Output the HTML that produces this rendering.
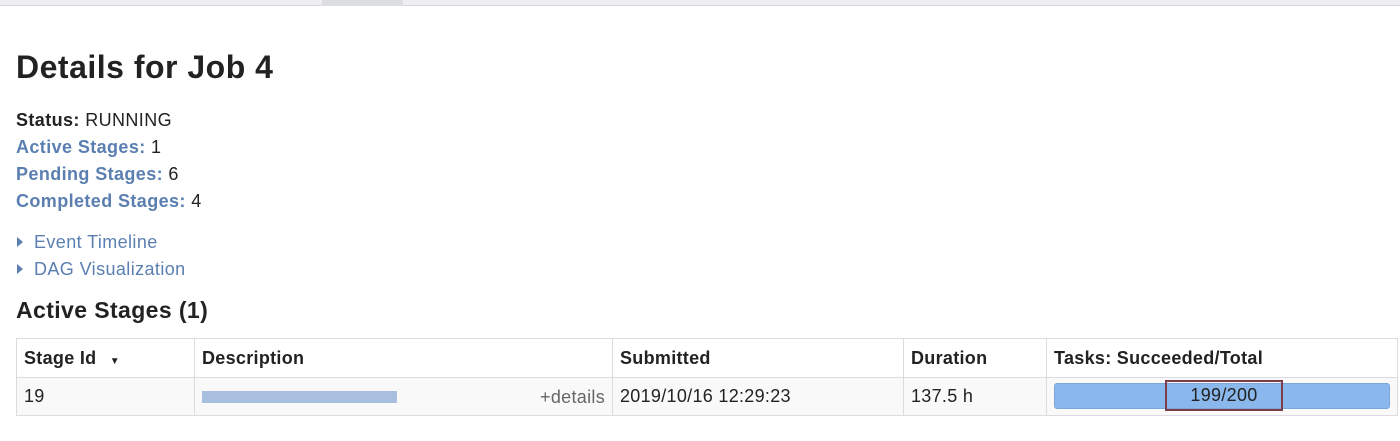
<!DOCTYPE html>
<html><head><style>
body{margin:0;width:1400px;height:441px;background:#fff;font-family:"Liberation Sans",sans-serif;color:#222;position:relative;overflow:hidden}
.a{position:absolute;white-space:nowrap}
.top{position:absolute;left:0;top:0;width:1400px;height:5px;background:#eeeff1;border-bottom:1px solid #d8d8dc}
.tab{position:absolute;left:322px;top:0;width:81px;height:6px;background:#dcdde1}
h1{position:absolute;left:16px;top:49px;margin:0;font-size:32px;letter-spacing:0.5px;font-weight:bold}
.ln{font-size:18px;letter-spacing:0.4px}
.lb{color:#5a7fb0;font-weight:bold}
.tri{display:inline-block;width:0;height:0;border-left:6px solid #5a7fb0;border-top:5px solid transparent;border-bottom:5px solid transparent;margin-right:11px;vertical-align:1px}
.lk{color:#5a7fb0}
table{position:absolute;left:16px;top:338px;border-collapse:collapse;font-size:18px;letter-spacing:0.3px}
td,th{border:1px solid #dcdce0;text-align:left;padding:0 7px}
th{height:38px;font-weight:bold}
td{height:37px;background:#f9f9f9}
</style></head><body>
<div class="top"></div><div class="tab"></div>
<h1>Details for Job 4</h1>
<div class="a ln" style="left:16px;top:110px"><b>Status:</b> RUNNING</div>
<div class="a ln" style="left:16px;top:137px"><span class="lb">Active Stages:</span> 1</div>
<div class="a ln" style="left:16px;top:164px"><span class="lb">Pending Stages:</span> 6</div>
<div class="a ln" style="left:16px;top:191px"><span class="lb">Completed Stages:</span> 4</div>
<div class="a ln lk" style="left:17px;top:232px"><span class="tri"></span>Event Timeline</div>
<div class="a ln lk" style="left:17px;top:259px"><span class="tri"></span>DAG Visualization</div>
<div class="a" style="left:16px;top:297px;font-size:23px;letter-spacing:0.4px;font-weight:bold">Active Stages (1)</div>
<table>
<tr><th style="width:163px">Stage Id <span style="font-size:10px;margin-left:8px">▼</span></th><th style="width:403px">Description</th><th style="width:276px">Submitted</th><th style="width:128px">Duration</th><th style="width:336px">Tasks: Succeeded/Total</th></tr>
<tr><td>19</td><td style="position:relative"><span style="display:inline-block;width:195px;height:12px;background:#a8bfe0;vertical-align:middle"></span><span style="position:absolute;right:7px;top:9px;color:#666">+details</span></td><td>2019/10/16 12:29:23</td><td>137.5 h</td><td style="position:relative;padding:0">
<div style="position:absolute;left:7px;top:5px;width:336px;height:26px;background:#8ab8ec;border-radius:3px;border:1px solid #7aa6da;box-sizing:border-box"></div>
<div style="position:absolute;left:118px;top:2px;width:118px;height:31px;border:2px solid #7a3e44;box-sizing:border-box;text-align:center;line-height:27px">199/200</div>
</td></tr>
</table>
</body></html>
